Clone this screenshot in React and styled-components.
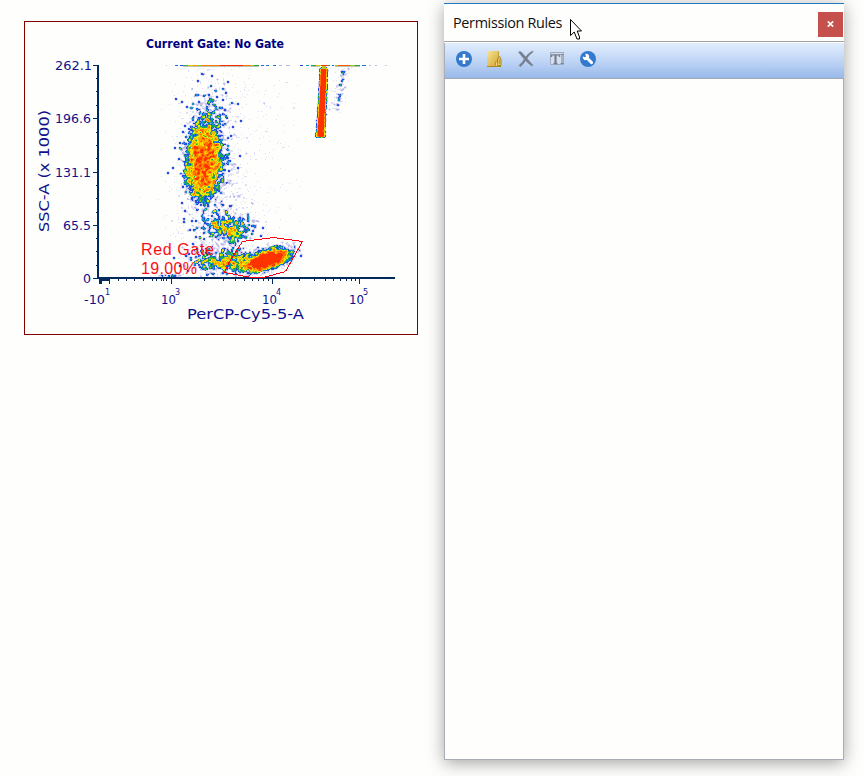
import React from "react";
import styled, { createGlobalStyle } from "styled-components";

const GlobalStyle = createGlobalStyle`
  * { box-sizing: border-box; }
  body { margin: 0; background: #fefefd; overflow: hidden; }
`;

const Page = styled.main`
  position: relative;
  display: flex;
  align-items: flex-start;
  gap: 26px;
  width: 864px;
  height: 776px;
  padding: 3px 20px 0 24px;
  background: #fefefd;
  overflow: hidden;
`;

const PlotCard = styled.section`
  flex: none;
  width: 394px;
  height: 314px;
  margin-top: 18px;
  border: 1px solid #800000;
`;

const PlotSvg = styled.svg`
  display: block;
  width: 392px;
  height: 312px;
`;

const AxisText = styled.text`
  font-family: "DejaVu Sans", Verdana, sans-serif;
  font-size: ${(p) => p.$size || 12.5}px;
  fill: #10108a;
`;

const TitleText = styled.text`
  font-family: "DejaVu Sans Condensed", "DejaVu Sans", Tahoma, sans-serif;
  font-weight: 700;
  font-size: 12px;
  fill: #000080;
`;

const GateText = styled.text`
  font-family: "Liberation Sans", Arial, sans-serif;
  font-size: 16px;
  fill: #ff0d12;
`;

const Window = styled.section`
  flex: none;
  display: flex;
  flex-direction: column;
  width: 400px;
  height: 757px;
  background: #fefefd;
  border-top: 1px solid #1f7ac2;
  box-shadow: 0 3px 16px rgba(0, 0, 0, 0.36);
`;

const TitleBar = styled.header`
  display: flex;
  align-items: center;
  justify-content: space-between;
  height: 38px;
  padding: 3px 1px 3px 9px;
  border-bottom: 1px solid #a2a2a2;
`;

const WindowTitle = styled.h1`
  margin: 0;
  padding-top: 1px;
  font: 400 14.4px/20px "Open Sans", "Segoe UI", sans-serif;
  letter-spacing: -0.33px;
  color: #101010;
`;

const CloseButton = styled.button`
  display: grid;
  place-items: center;
  width: 25px;
  height: 25px;
  margin-top: 3px;
  padding: 0;
  border: 0;
  background: #c5504c;
`;

const Toolbar = styled.nav`
  display: flex;
  align-items: center;
  gap: 13px;
  height: 36px;
  margin-top: 1px;
  padding: 0 0 3px 10px;
  border-left: 1px solid #a8adb8;
  border-bottom: 1px solid #a3a8b4;
  background: linear-gradient(#e2edfd, #c0d6f6 50%, #98b9e9);
`;

const ToolButton = styled.button`
  display: block;
  width: 18px;
  height: 18px;
  padding: 0;
  border: 0;
  background: none;
`;

const RuleList = styled.div`
  flex: 1;
  border: solid #a9acb9;
  border-width: 0 1px 1px;
`;

const Cursor = styled.svg`
  position: absolute;
  left: 570px;
  top: 19px;
`;

/* Seeded generator keeps the event cloud identical on every render. */
function makeRandom(seed) {
  let s = seed;
  return () => {
    s = (s + 0x6d2b79f5) | 0;
    let t = Math.imul(s ^ (s >>> 15), 1 | s);
    t = (t + Math.imul(t ^ (t >>> 7), 61 | t)) ^ t;
    return ((t ^ (t >>> 14)) >>> 0) / 4294967296;
  };
}

const LEVELS = [
  [0.22, "#dedef4"],
  [0.4, "#bdbde8"],
  [0.66, "#1f4ee0"],
  [0.96, "#1496c8"],
  [1.28, "#1ca64c"],
  [1.62, "#8fce14"],
  [1.88, "#f2e300"],
  [2.5, "#ffab00"],
  [3.3, "#ff7300"],
  [4.3, "#ff3300"],
];

const GRID = { x0: 99, y0: 65, w: 300, h: 212 };

function buildCloud() {
  const rnd = makeRandom(42);
  const gauss = () =>
    Math.sqrt(-2 * Math.log(rnd() + 1e-9)) * Math.cos(2 * Math.PI * rnd());
  const { x0, y0, w, h } = GRID;
  const bins = new Float32Array(w * h);
  const add = (x, y, weight = 1) => {
    const i = Math.floor(x - x0);
    const j = Math.floor(y - y0);
    if (i >= 0 && i < w && j >= 1 && j < h) bins[j * w + i] += weight;
  };
  const blob = (n, cx, cy, sx, sy, slope = 0, weight = 1) => {
    for (let k = 0; k < n; k++) {
      const dx = gauss() * sx;
      add(cx + dx, cy + gauss() * sy + dx * slope, weight);
    }
  };
  // Tight event clusters, two pixels wide.
  const clumps = (n, cx, cy, sx, sy, slope = 0) => {
    for (let k = 0; k < n; k++) {
      const dx = gauss() * sx;
      const x = cx + dx;
      const y = cy + gauss() * sy + dx * slope;
      add(x, y, 1.3);
      add(x + 1, y, 1.3);
      add(x, y + 1, 1.3);
      add(x + 1, y + 1, 1.3);
    }
  };
  // Evenly filled ellipse with a soft rim.
  const disc = (n, cx, cy, rx, ry, slope = 0) => {
    for (let k = 0; k < n; k++) {
      const a = rnd() * Math.PI * 2;
      const r = Math.sqrt(rnd());
      const dx = Math.cos(a) * r * rx + gauss() * 3;
      add(cx + dx, cy + Math.sin(a) * r * ry + gauss() * 5 + dx * slope);
    }
  };
  // granulocytes
  disc(2400, 204, 163, 17, 37);
  blob(2100, 202, 165, 8.5, 20);
  clumps(400, 204, 158, 10.5, 23);
  blob(220, 206, 122, 9, 14);
  clumps(45, 207, 122, 10, 18);
  clumps(30, 212, 100, 13, 18);
  // monocytes
  blob(430, 230, 229, 13, 8);
  clumps(125, 231, 229, 12, 7);
  clumps(60, 212, 226, 15, 10);
  // lymphocytes and debris
  blob(3300, 268, 260, 10.5, 4.8, -0.3);
  clumps(120, 264, 260, 13, 5, -0.28);
  blob(480, 240, 261, 14, 6);
  clumps(105, 238, 261, 14, 5);
  blob(300, 208, 260, 13, 8);
  clumps(90, 209, 261, 13, 6);
  // background events
  blob(850, 213, 140, 17, 48, 0, 0.95);
  blob(460, 222, 225, 27, 30, 0, 0.95);
  blob(60, 170, 276, 7, 1);
  for (let k = 0; k < 110; k++) add(225 + rnd() * 75, 80 + rnd() * 160);
  // bead column
  for (let k = 0; k < 3900; k++) {
    const t = rnd();
    const y = 68 + t * 69;
    add(324 - t * 3.6 + (rnd() + rnd() + rnd() - 1.5) * (3 + t), y);
  }
  for (let k = 0; k < 110; k++) {
    const t = rnd();
    add(345 - t * 11 + gauss() * 4, 68 + t * 45, 0.95);
  }
  [[342, 72], [341, 80], [340, 84], [339, 94], [338, 97], [338, 99], [337, 104]].forEach(
    ([x, y]) => {
      [[0, 0], [1, 0], [0, 1], [1, 1]].forEach(([a, b]) => add(x + a, y + b, 1.3));
    }
  );

  const at = (i, j) => (i < 0 || j < 0 || i >= w || j >= h ? 0 : bins[j * w + i]);
  const paths = LEVELS.map(() => "");
  for (let j = 1; j < h; j++) {
    let run = -1;
    let start = 0;
    for (let i = 0; i <= w; i++) {
      let level = -1;
      if (i < w) {
        const edge = at(i - 1, j) + at(i + 1, j) + at(i, j - 1) + at(i, j + 1);
        const corner =
          at(i - 1, j - 1) + at(i + 1, j - 1) + at(i - 1, j + 1) + at(i + 1, j + 1);
        const d = at(i, j) * 0.26 + edge * 0.125 + corner * 0.06;
        LEVELS.forEach(([min], n) => {
          if (d >= min) level = n;
        });
      }
      if (level !== run) {
        if (run >= 0) paths[run] += `M${x0 + start} ${y0 + j}h${i - start}v1h${start - i}z`;
        run = level;
        start = i;
      }
    }
  }
  return paths;
}

const CLOUD = buildCloud();

/* Saturated events piled on the top edge: start, end, colour. */
const TOP_EDGE = [
  [166, 167, "#c9c9ee"], [175, 178, "#1f70d8"], [180, 183, "#1f4ee0"],
  [183, 188, "#38b048"], [188, 193, "#e0d000"], [193, 197, "#ff9a00"],
  [197, 201, "#9acb20"], [201, 220, "#ff7a00"], [220, 243, "#ff2a00"],
  [243, 251, "#ff7a00"], [251, 254, "#9acb20"], [254, 259, "#1ca64c"],
  [261, 264, "#1f70d8"], [266, 269, "#1f70d8"], [273, 276, "#1f70d8"],
  [279, 282, "#b9b9e6"], [286, 290, "#b9b9e6"], [300, 303, "#1f4ee0"],
  [306, 309, "#1496c8"], [311, 316, "#1ca64c"], [316, 321, "#e0d000"],
  [321, 327, "#ff3300"], [327, 330, "#1ca64c"], [332, 334, "#1f70d8"],
  [335, 338, "#9acb20"], [338, 350, "#ff5a00"], [350, 355, "#9acb20"],
  [355, 360, "#1ca64c"], [362, 366, "#1f70d8"], [369, 371, "#b9b9e6"],
  [375, 377, "#b9b9e6"], [385, 387, "#c9c9ee"],
];

const Y_LABELS = [
  ["262.1", 65, 55, 37],
  ["196.6", 118, 55, 36],
  ["131.1", 172, 55, 36],
  ["65.5", 225, 63, 28],
  ["0", 278, 83, 8],
];
const Y_MINOR = [78, 91, 105, 132, 145, 158, 185, 198, 212, 238, 251, 265];
const X_MAJOR = [109, 171, 272, 359];
const X_MINOR = [
  118, 126, 134, 143, 152, 156, 161, 163, 166, 204, 223, 235, 244, 252, 258,
  263, 268, 299, 314, 325, 333, 340, 346, 351, 355,
];
const X_LABELS = [
  ["-10", "1", 84, 21, 105],
  ["10", "3", 161, 15, 175],
  ["10", "4", 262, 15, 276],
  ["10", "5", 349, 15, 363],
];

function Axes() {
  return (
    <g fill="#002a5c" shapeRendering="crispEdges">
      <rect x="97" y="65" width="2" height="214" />
      <rect x="97" y="277" width="298" height="2" />
      <rect x="99" y="279" width="11" height="2" />
      <rect x="99" y="279" width="3" height="5" />
      {Y_LABELS.map(([, y]) => <rect key={y} x="93" y={y} width="4" height="1" />)}
      {Y_MINOR.map((y) => <rect key={y} x="96" y={y} width="1" height="1" />)}
      {X_MAJOR.map((x) => <rect key={x} x={x} y="279" width="1" height="5" />)}
      {X_MINOR.map((x) => <rect key={x} x={x} y="279" width="1" height="2" />)}
    </g>
  );
}

function DensityPlot() {
  return (
    <PlotCard>
      <PlotSvg viewBox="25 22 392 312">
        <TitleText x="146" y="48" textLength="138" lengthAdjust="spacingAndGlyphs">
          Current Gate: No Gate
        </TitleText>
        <g shapeRendering="crispEdges">
          {CLOUD.map((d, n) => <path key={n} d={d} fill={LEVELS[n][1]} />)}
          {TOP_EDGE.map(([a, b, fill]) => (
            <rect key={a} x={a} y="65" width={b - a} height="1" fill={fill} />
          ))}
          <rect x="183" y="66" width="76" height="1" fill="#8f9a80" opacity=".6" />
          <rect x="311" y="66" width="9" height="1" fill="#8f9a80" opacity=".6" />
          <rect x="335" y="66" width="25" height="1" fill="#8f9a80" opacity=".6" />
          <rect x="322" y="66" width="4" height="3" fill="#b8c81c" />
        </g>
        <Axes />
        {Y_LABELS.map(([label, y, x, width]) => (
          <AxisText key={label} x={x} y={y + 5} textLength={width} lengthAdjust="spacingAndGlyphs">
            {label}
          </AxisText>
        ))}
        {X_LABELS.map(([base, exp, x, width, ex]) => (
          <React.Fragment key={exp}>
            <AxisText x={x} y="304" $size={12} textLength={width} lengthAdjust="spacingAndGlyphs">
              {base}
            </AxisText>
            <AxisText x={ex} y="295" $size={8}>{exp}</AxisText>
          </React.Fragment>
        ))}
        <AxisText x="187" y="319" $size={14} textLength="117" lengthAdjust="spacingAndGlyphs">
          PerCP-Cy5-5-A
        </AxisText>
        <AxisText
          transform="translate(49 232) rotate(-90)"
          $size={14.5}
          textLength="122"
          lengthAdjust="spacingAndGlyphs"
        >
          SSC-A (x 1000)
        </AxisText>
        <path
          d="M302.5 241.5L273.5 237.5L242.5 241.5L229.5 261.5L224.5 272.5L251.5 277.5H263.5L285.5 271.5Z"
          fill="none"
          stroke="#ff0010"
          shapeRendering="crispEdges"
        />
        <GateText x="141" y="255" textLength="73">Red Gate</GateText>
        <GateText x="141" y="274" textLength="56">19.00%</GateText>
      </PlotSvg>
    </PlotCard>
  );
}

function AddIcon() {
  return (
    <svg width="18" height="18" viewBox="0 0 18 18">
      <circle cx="9" cy="9" r="8" fill="#3479cc" />
      <path d="M9 4v10M4 9h10" stroke="#fff" strokeWidth="2.6" />
    </svg>
  );
}

function FolderIcon() {
  return (
    <svg width="18" height="18" viewBox="0 0 18 18">
      <defs>
        <linearGradient id="folder" x2="1" y2="1">
          <stop offset="0" stopColor="#f7e398" />
          <stop offset="1" stopColor="#d3a52c" />
        </linearGradient>
      </defs>
      <path d="M1 2L2 1h11v15H1z" fill="url(#folder)" />
      <path d="M1 16.500h14" stroke="#ae8525" />
      <path d="M12.500 1.500V8" stroke="#c79f3a" />
      <path d="M11.500 15.500V9l2-2.500L15 9v6.500z" fill="#edcf68" stroke="#a98422" />
      <path d="M9.500 15.500V12h2v3.500M13.300 9v5" fill="#f7df88" stroke="#bc9128" />
    </svg>
  );
}

function DeleteIcon() {
  return (
    <svg width="18" height="18" viewBox="0 0 18 18" fill="#777f8e" stroke="#777f8e" strokeWidth=".5">
      <path d="M1.500 2.200Q3 1 4.500 2.200Q8 6 10.500 9Q13 12 16 15.200L14.800 16Q10.500 13 8 10Q5 6.500 1.500 2.200z" />
      <path d="M16.300 1.800Q11.500 5 9.500 9Q7.500 13 4 16.300Q2.600 16.700 2 15.500Q5.500 12.500 7.500 8.800Q10 4 15.500 1z" />
    </svg>
  );
}

function RenameIcon() {
  return (
    <svg width="18" height="18" viewBox="0 0 18 18" fill="none">
      <path d="M2.500 2.500h13v12h-13z" fill="#d3deee" stroke="#9da9bc" />
      <path d="M3.500 7V4.800h8V7M5.500 13.500h4" stroke="#737d8f" strokeWidth="1.300" />
      <path d="M7.500 5v8.500" stroke="#737d8f" strokeWidth="2.200" />
      <path d="M12.500 4.500h3M14 4.500v9M12.500 13.500h3" stroke="#788396" />
    </svg>
  );
}

function WrenchIcon() {
  return (
    <svg width="18" height="18" viewBox="0 0 18 18">
      <circle cx="9" cy="9" r="8" fill="#3479cc" />
      <path d="M8 8L12.600 12.600" stroke="#fff" strokeWidth="2.900" strokeLinecap="round" />
      <path d="M6.300 3.900l.7 2.500-.8.8-2.400-.6c-.5 2.500 1.700 4.200 3.700 3.500L10 7.500c.8-2.100-1-4.300-3.700-3.600z" fill="#fff" />
    </svg>
  );
}

const TOOLS = [
  ["Add", AddIcon],
  ["Open", FolderIcon],
  ["Delete", DeleteIcon],
  ["Rename", RenameIcon],
  ["Settings", WrenchIcon],
];

function PermissionWindow() {
  return (
    <Window>
      <TitleBar>
        <WindowTitle>Permission Rules</WindowTitle>
        <CloseButton aria-label="Close">
          <svg width="7" height="6" viewBox="0 0 7 6">
            <path d="M.8.4L6.200 5.600M6.200.4L.8 5.600" stroke="#fff" strokeWidth="1.700" />
          </svg>
        </CloseButton>
      </TitleBar>
      <Toolbar>
        {TOOLS.map(([name, Icon]) => (
          <ToolButton key={name} aria-label={name}><Icon /></ToolButton>
        ))}
      </Toolbar>
      <RuleList />
    </Window>
  );
}

export default function App() {
  return (
    <>
      <GlobalStyle />
      <Page>
        <DensityPlot />
        <PermissionWindow />
        <Cursor width="13" height="22" viewBox="0 0 13 22">
          <path
            d="M.5.5V16.500L4.200 13L7 20H9.500V18L7.200 12H11.500Z"
            fill="#fff"
            stroke="#000"
          />
        </Cursor>
      </Page>
    </>
  );
}
